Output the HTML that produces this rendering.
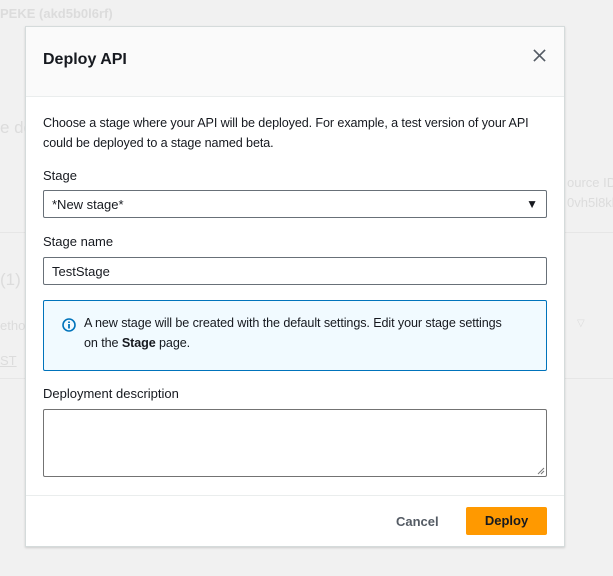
<!DOCTYPE html>
<html><head><style>
*{box-sizing:border-box;margin:0;padding:0}
body{width:613px;height:576px;background:#f1f1f1;font-family:"Liberation Sans",sans-serif;position:relative;overflow:hidden;color:#16191f}
.bg{position:absolute;color:#dcdcdc;font-size:13px;white-space:nowrap}
.m{position:absolute;left:25px;top:26px;width:540px;height:521px;background:#fff;border:1px solid #d5dbdb;box-shadow:0 1px 2px rgba(0,0,0,.15)}
.hd{position:absolute;left:0;top:0;width:100%;height:70px;background:#fafafa;border-bottom:1px solid #eaeded}
.a{position:absolute}
.in{position:absolute;left:17px;width:504px;border:1px solid #687078;border-radius:2px;background:#fff}
.lbl{font-size:13px;color:#16191f}
</style></head><body>
<div class="bg" style="left:0;top:6px;font-weight:bold">PEKE (akd5b0l6rf)</div>
<div class="bg" style="left:0;top:118px;font-size:17px">e de</div>
<div class="bg" style="left:567px;top:175px">ource ID</div>
<div class="bg" style="left:567px;top:195px">0vh5l8kb</div>
<div class="bg" style="left:0;top:270px;font-size:17px">(1)</div>
<div class="bg" style="left:0;top:318px">ethod</div>
<div class="bg" style="left:0;top:353px;text-decoration:underline">ST</div>
<div class="bg" style="left:577px;top:318px;font-size:10px">▽</div>
<div style="position:absolute;left:0;top:232px;width:613px;height:1px;background:#e6e6e6"></div>
<div style="position:absolute;left:0;top:378px;width:613px;height:1px;background:#e6e6e6"></div>
<div class="m">
 <div class="hd"></div>
 <div class="a" style="left:17px;top:24px;font-size:16px;font-weight:bold">Deploy API</div>
 <svg class="a" style="left:507px;top:22px" width="13" height="13" viewBox="0 0 14 14"><path d="M1 1L13 13M13 1L1 13" stroke="#545b64" stroke-width="1.8"/></svg>
 <div class="a lbl" style="left:17px;top:86px;line-height:20px;width:510px;font-size:12.6px;letter-spacing:-0.1px">Choose a stage where your API will be deployed. For example, a test version of your API could be deployed to a stage named beta.</div>
 <div class="a lbl" style="left:17px;top:141px">Stage</div>
 <div class="in" style="top:163px;height:28px;padding:6px 8px;font-size:13px">*New stage*<span style="position:absolute;right:8px;top:6px;font-size:12px">▼</span></div>
 <div class="a lbl" style="left:17px;top:207px">Stage name</div>
 <div class="in" style="top:230px;height:28px;padding:6px 8px;font-size:13px">TestStage</div>
 <div class="a" style="left:17px;top:273px;width:504px;height:71px;background:#f1faff;border:1px solid #0073bb;border-radius:2px">
  <svg class="a" style="left:18px;top:17px" width="14" height="14" viewBox="0 0 14 14"><circle cx="7" cy="7" r="6" fill="none" stroke="#0073bb" stroke-width="1.6"/><path d="M7 6v4.5M7 3.5v1.5" stroke="#0073bb" stroke-width="1.8"/></svg>
  <div class="a" style="left:40px;top:12px;font-size:12.6px;line-height:20px;width:460px;letter-spacing:-0.1px;white-space:nowrap">A new stage will be created with the default settings. Edit your stage settings<br>on the <b>Stage</b> page.</div>
 </div>
 <div class="a lbl" style="left:17px;top:359px">Deployment description</div>
 <div class="in" style="top:382px;height:68px;border-color:#737373"><svg class="a" style="right:1px;bottom:1px" width="8" height="8" viewBox="0 0 8 8"><path d="M7 1L1 7M7 4L4 7" stroke="#777" stroke-width="1"/></svg></div>
 <div class="a" style="left:0;top:468px;width:100%;height:1px;background:#eaeded"></div>
 <div class="a" style="left:370px;top:487px;font-size:13px;font-weight:bold;color:#545b64">Cancel</div>
 <div class="a" style="left:440px;top:480px;width:81px;height:28px;background:#ff9900;border-radius:2px;font-size:13px;font-weight:bold;color:#16191f;text-align:center;line-height:28px">Deploy</div>
</div>
</body></html>
